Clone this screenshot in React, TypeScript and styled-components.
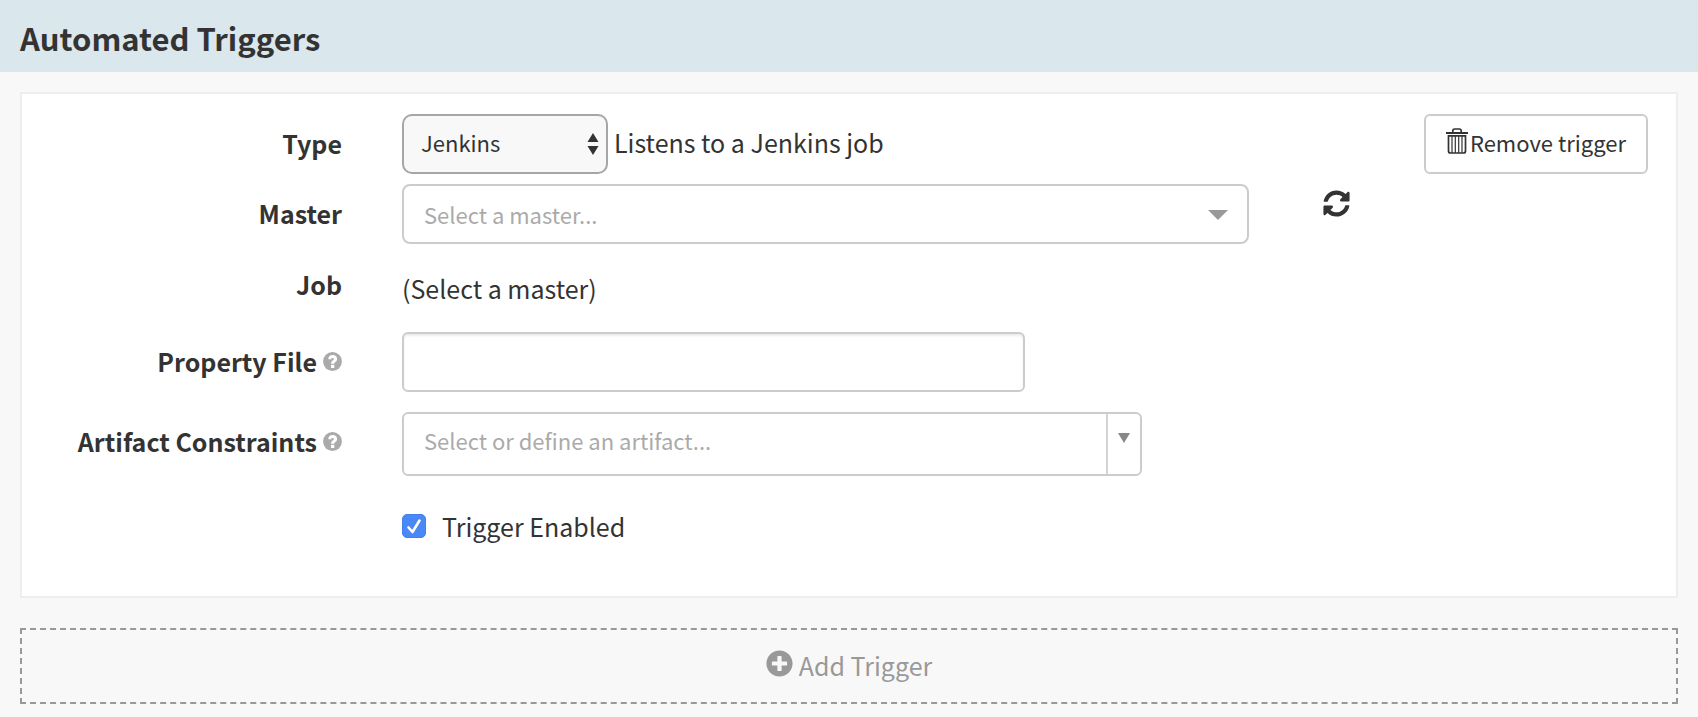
import React from 'react';
import styled, { createGlobalStyle } from 'styled-components';
import { FaPlusCircle, FaSyncAlt } from 'react-icons/fa';

const GlobalStyle = createGlobalStyle`
  *, *::before, *::after { box-sizing: border-box; }
  body {
    margin: 0;
    background: #f8f8f8;
    color: #333;
    font-family: "Noto Sans CJK SC", "Open Sans", sans-serif;
    font-size: 25px;
    line-height: 40px;
  }
  button, input, select { font-family: inherit; color: inherit; }
`;

const Header = styled.header`
  background: #dae7ed;
  padding: 14px 20px 10px;
`;

const Title = styled.h2`
  margin: 0;
  font-size: 31px;
  line-height: 48px;
  font-weight: 700;
`;

const Content = styled.main`
  padding: 20px 20px 12px;
`;

const Card = styled.form`
  background: #fff;
  border: 2px solid #eee;
  padding: 20px 28px 50px;
`;

const Row = styled.div<{ $gap?: number; $align?: string }>`
  display: grid;
  grid-template-columns: 292px minmax(0, 1fr);
  column-gap: 60px;
  align-items: ${p => p.$align ?? 'center'};
  margin-bottom: ${p => p.$gap ?? 0}px;
`;

const Label = styled.label<{ $bottom?: number }>`
  display: flex;
  align-items: center;
  justify-content: flex-end;
  gap: 6px;
  padding-bottom: ${p => p.$bottom ?? 2}px;
  font-weight: 700;
  white-space: nowrap;
`;

const Field = styled.div`
  display: flex;
  align-items: center;
`;

const Note = styled.p`
  margin: 0;
  padding-top: 4px;
`;

const SelectBox = styled.div<{ $width: string }>`
  position: relative;
  width: ${p => p.$width};
`;

const TypeSelect = styled.select`
  appearance: none;
  display: block;
  width: 100%;
  height: 60px;
  padding: 0 44px 4px 17px;
  border: 2px solid #a6a6a6;
  border-radius: 10px;
  background: #f8f8f8;
  font-size: 22px;
`;

const MasterSelect = styled(TypeSelect)`
  padding: 0 60px 0 20px;
  border-color: #ccc;
  border-radius: 8px;
  background: #fff;
  color: #aaa;
`;

const Marker = styled.svg<{ $right: number }>`
  position: absolute;
  right: ${p => p.$right}px;
  top: 50%;
  transform: translateY(-50%);
  pointer-events: none;
`;

const Description = styled.span`
  flex: 1;
  padding: 0 0 4px 6px;
`;

const RemoveButton = styled.button`
  display: flex;
  align-items: center;
  justify-content: center;
  gap: 2px;
  width: 224px;
  height: 60px;
  padding: 0 0 4px;
  border: 2px solid #ccc;
  border-radius: 6px;
  background: #fff;
  font-size: 22px;
  cursor: pointer;
  svg { margin-bottom: 2px; }
`;

const RefreshButton = styled.button`
  display: flex;
  align-self: flex-start;
  margin-left: 74px;
  padding: 6px 0;
  border: 0;
  background: none;
  font-size: 27px;
  cursor: pointer;
`;

const TextInput = styled.input`
  width: 50%;
  height: 60px;
  padding: 0 20px;
  border: 2px solid #ccc;
  border-radius: 6px;
  background: #fff;
  box-shadow: inset 0 2px 2px rgba(0, 0, 0, 0.075);
  font-size: 22px;
`;

const Combo = styled.div`
  display: flex;
  width: 740px;
  height: 64px;
  border: 2px solid #ccc;
  border-radius: 6px;
  background: #fff;
`;

const ComboInput = styled.input`
  flex: 1;
  min-width: 0;
  padding: 0 20px 8px;
  border: 0;
  background: none;
  font-size: 22px;
  &::placeholder { color: #aaa; opacity: 1; }
`;

const ComboToggle = styled.button`
  display: flex;
  align-items: center;
  justify-content: center;
  width: 34px;
  padding: 0 0 12px;
  border: 0;
  border-left: 2px solid #d4d4d4;
  background: none;
  cursor: pointer;
`;

const CheckBox = styled.span`
  position: relative;
  display: flex;
  width: 24px;
  height: 24px;
  svg { position: absolute; inset: 0; pointer-events: none; }
`;

const CheckInput = styled.input`
  appearance: none;
  width: 24px;
  height: 24px;
  margin: 0;
  border-radius: 5px;
  background: #fff;
  border: 1px solid #bbb;
  &:checked { background: #4a88f7; border-color: #4280ee; }
`;

const CheckLabel = styled.label`
  display: flex;
  align-items: center;
  gap: 16px;
`;

const AddButton = styled.button`
  display: flex;
  align-items: center;
  justify-content: center;
  gap: 6px;
  width: 100%;
  height: 76px;
  margin-top: 30px;
  padding: 0 0 2px;
  border: 2px dashed #999;
  background: none;
  color: #999;
  font-size: 25px;
  cursor: pointer;
  svg { margin-bottom: 4px; }
`;

const HelpIcon = () => (
  <svg width="19" height="19" viewBox="0 0 19 19" role="img" aria-label="Help">
    <circle cx="9.5" cy="9.5" r="9.4" fill="#aaa" />
    <path d="M5.300 7.300C5.300 4.500 7 3.100 9.700 3.100s4.400 1.400 4.400 3.800c0 2.900-2.800 3-2.800 4.800H8.100c0-3 2.700-3.200 2.700-4.600 0-.8-.4-1.200-1.100-1.200-.9 0-1.400.5-1.400 1.400z" fill="#fff" />
    <path d="M8 12.800h3.300v3.200H8z" fill="#fff" />
  </svg>
);

const TrashIcon = () => (
  <svg width="22" height="26" viewBox="0 0 22 26" fill="none" stroke="currentColor" aria-hidden="true">
    <path d="M0 5h22" strokeWidth="2" />
    <path d="M6.800 4.500V2.800Q6.800 1 8.600 1h4.800q1.800 0 1.800 1.800v1.700" strokeWidth="1.700" />
    <path d="M2.500 7.800v15.200q0 2 2 2h13q2 0 2-2V7.800z" strokeWidth="1.700" />
    <path d="M6 8v17M9.300 8v17M12.700 8v17M16 8v17" strokeWidth="1.200" />
  </svg>
);

export default function App() {
  return (
    <>
      <GlobalStyle />
      <Header>
        <Title>Automated Triggers</Title>
      </Header>
      <Content>
        <Card onSubmit={e => e.preventDefault()}>
          <Row $gap={10}>
            <Label htmlFor="type">Type</Label>
            <Field>
              <SelectBox $width="206px">
                <TypeSelect id="type" defaultValue="jenkins">
                  <option value="jenkins">Jenkins</option>
                </TypeSelect>
                <Marker $right={9} width="12" height="22" viewBox="0 0 12 22" fill="#333">
                  <path d="M6 0l5.500 9H.5zM6 22l5.500-9H.5z" />
                </Marker>
              </SelectBox>
              <Description>Listens to a Jenkins job</Description>
              <RemoveButton type="button">
                <TrashIcon />
                Remove trigger
              </RemoveButton>
            </Field>
          </Row>
          <Row $gap={20}>
            <Label htmlFor="master">Master</Label>
            <Field>
              <SelectBox $width="68%">
                <MasterSelect id="master" defaultValue="">
                  <option value="">Select a master...</option>
                </MasterSelect>
                <Marker $right={21} width="20" height="12" viewBox="0 0 20 12" fill="#999">
                  <path d="M0 2h20L10 12z" />
                </Marker>
              </SelectBox>
              <RefreshButton type="button" aria-label="Refresh masters">
                <FaSyncAlt />
              </RefreshButton>
            </Field>
          </Row>
          <Row $gap={24} $align="start">
            <Label as="span">Job</Label>
            <Note>(Select a master)</Note>
          </Row>
          <Row $gap={20}>
            <Label htmlFor="property">Property File <HelpIcon /></Label>
            <Field>
              <TextInput id="property" type="text" />
            </Field>
          </Row>
          <Row $gap={30}>
            <Label htmlFor="artifact" $bottom={6}>Artifact Constraints <HelpIcon /></Label>
            <Field>
              <Combo>
                <ComboInput id="artifact" type="text" placeholder="Select or define an artifact..." />
                <ComboToggle type="button" aria-label="Show artifacts">
                  <svg width="12" height="10" viewBox="0 0 12 10" fill="#888">
                    <path d="M0 0h12L6 10z" />
                  </svg>
                </ComboToggle>
              </Combo>
            </Field>
          </Row>
          <Row>
            <span />
            <Field>
              <CheckLabel>
                <CheckBox>
                  <CheckInput type="checkbox" defaultChecked />
                  <svg viewBox="0 0 24 24" fill="none" stroke="#fff" strokeWidth="2.600" strokeLinecap="round" strokeLinejoin="round">
                    <path d="M6.500 13.500l4 4.500L17.500 6.500" />
                  </svg>
                </CheckBox>
                Trigger Enabled
              </CheckLabel>
            </Field>
          </Row>
        </Card>
        <AddButton type="button">
          <FaPlusCircle size={27} />
          Add Trigger
        </AddButton>
      </Content>
    </>
  );
}
